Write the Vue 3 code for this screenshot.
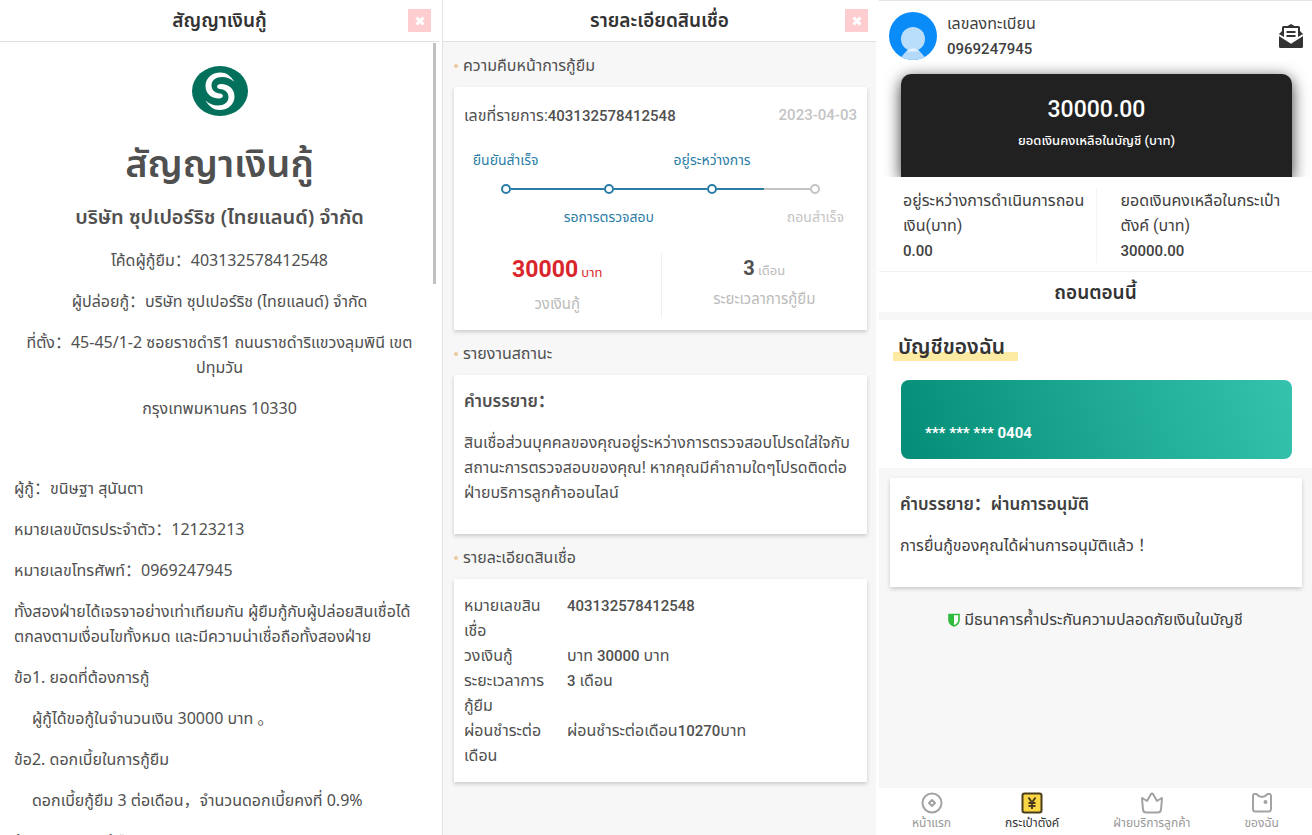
<template>
  <div class="screens">
    <!-- Contract -->
    <section class="panel contract">
      <header class="panel-header">
        <h2 class="panel-title">สัญญาเงินกู้</h2>
        <button class="close-button" type="button" aria-label="ปิด">
          <svg viewBox="0 0 12 12" width="12" height="12">
            <path d="M2.5 2.5l7 7M9.5 2.5l-7 7" />
          </svg>
        </button>
      </header>
      <div class="contract-body">
        <svg class="brand" viewBox="0 0 56 50" width="56" height="50">
          <ellipse cx="28" cy="25" rx="28" ry="25" fill="#03705b" />
          <path
            d="M42.500 16C38.500 9.500 34 6.500 28.500 6.500C19.500 6.500 13.500 12.500 13.500 20C13.500 27.500 19 32.500 27 32.500C32 32.500 32 28 28 27.500C23 27 19.500 24 19.500 19.500C19.500 14 24 11 30 11C35 11 38.500 12.500 42.500 16Z"
            fill="#fff"
          />
          <path
            d="M13.500 34.500C17.500 41 22 44 27.500 44C36.500 44 42.500 38 42.500 30.500C42.500 23 37 18 29 18C24 18 24 22.500 28 23C33 23.500 36.500 26.500 36.500 31C36.500 36.500 32 39.500 26 39.500C21 39.500 17.500 38 13.500 34.500Z"
            fill="#fff"
          />
        </svg>
        <h1 class="contract-title">สัญญาเงินกู้</h1>
        <h4 class="company">บริษัท ซุปเปอร์ริช (ไทยแลนด์) จำกัด</h4>
        <div class="parties">
          <p v-for="line in parties" :key="line">{{ line }}</p>
        </div>
        <p v-for="item in clauses" :key="item.text" :class="{ indent: item.indent }">{{ item.text }}</p>
      </div>
      <div class="scroll-thumb"></div>
    </section>

    <!-- Loan detail -->
    <section class="panel detail">
      <header class="panel-header">
        <h2 class="panel-title">รายละเอียดสินเชื่อ</h2>
        <button class="close-button" type="button" aria-label="ปิด">
          <svg viewBox="0 0 12 12" width="12" height="12">
            <path d="M2.5 2.5l7 7M9.5 2.5l-7 7" />
          </svg>
        </button>
      </header>

      <h3 class="section-label">ความคืบหน้าการกู้ยืม</h3>
      <div class="card progress-card">
        <div class="order-row">
          <span>เลขที่รายการ:<b>403132578412548</b></span>
          <time datetime="2023-04-03">2023-04-03</time>
        </div>
        <ol class="steps">
          <li v-for="step in steps" :key="step.label" class="step" :class="step.state">
            <span class="step-label">{{ step.label }}</span>
            <span class="step-track">
              <i class="line"></i>
              <i class="dot"></i>
              <i class="line"></i>
            </span>
          </li>
        </ol>
        <div class="stats">
          <div class="stat amount">
            <p class="stat-value"><b>30000</b> บาท</p>
            <p class="stat-label">วงเงินกู้</p>
          </div>
          <div class="stat period">
            <p class="stat-value"><b>3</b> เดือน</p>
            <p class="stat-label">ระยะเวลาการกู้ยืม</p>
          </div>
        </div>
      </div>

      <h3 class="section-label">รายงานสถานะ</h3>
      <div class="card note-card">
        <h4>คำบรรยาย：</h4>
        <p>สินเชื่อส่วนบุคคลของคุณอยู่ระหว่างการตรวจสอบโปรดใส่ใจกับสถานะการตรวจสอบของคุณ! หากคุณมีคำถามใดๆโปรดติดต่อฝ่ายบริการลูกค้าออนไลน์</p>
      </div>

      <h3 class="section-label">รายละเอียดสินเชื่อ</h3>
      <div class="card">
        <table class="loan-table">
          <tbody>
            <tr v-for="row in loanRows" :key="row.name">
              <th scope="row">{{ row.name }}</th>
              <td>{{ row.before }}<b>{{ row.number }}</b>{{ row.after }}</td>
            </tr>
          </tbody>
        </table>
      </div>
    </section>

    <!-- Wallet -->
    <section class="panel wallet">
      <div class="wallet-top">
        <div class="profile">
          <svg class="avatar" viewBox="0 0 48 48" width="48" height="48">
            <defs>
              <clipPath id="avatar-clip"><circle cx="24" cy="24" r="24" /></clipPath>
            </defs>
            <g clip-path="url(#avatar-clip)">
              <rect width="48" height="48" fill="#0a8cf8" />
              <path d="M10 50C12 44 16 41 18.500 38Q24 33 29.500 38C32 41 36 44 38 50Z" fill="#b3dafb" />
              <circle cx="24" cy="27" r="12" fill="#b9defc" />
              <path d="M18 39.500Q24 33 30 39.500Z" fill="#e3f2fe" />
            </g>
          </svg>
          <div class="profile-text">
            <p>เลขลงทะเบียน</p>
            <p><b>0969247945</b></p>
          </div>
          <button class="mail-button" type="button" aria-label="ข้อความ">
            <svg viewBox="0 0 26 26" width="26" height="26">
              <path d="M4 4.500Q4 3 5.500 3H9.500L13 1L16.500 3H20.500Q22 3 22 4.500V8L25 11V23.500Q25 25 23.500 25H2.500Q1 25 1 23.500V11L4 8Z" fill="#333" />
              <path d="M6 5H20V14.500L13 19L6 14.500Z" fill="#fff" />
              <path d="M1 12L13 19.500L25 12" fill="none" stroke="#fff" stroke-width="2" />
              <path d="M8.500 9H17.500M8.500 13H17.500" stroke="#333" stroke-width="2" />
            </svg>
          </button>
        </div>
        <div class="balance-wrap">
          <div class="balance">
            <strong>30000.00</strong>
            <span>ยอดเงินคงเหลือในบัญชี (บาท)</span>
          </div>
        </div>
        <div class="funds">
          <div class="fund">
            <p>อยู่ระหว่างการดำเนินการถอนเงิน(บาท)</p>
            <p><b>0.00</b></p>
          </div>
          <div class="fund">
            <p>ยอดเงินคงเหลือในกระเป๋าตังค์ (บาท)</p>
            <p><b>30000.00</b></p>
          </div>
        </div>
        <button class="withdraw" type="button">ถอนตอนนี้</button>
      </div>

      <div class="account">
        <h3 class="account-title">บัญชีของฉัน</h3>
        <div class="bank-card">*** *** *** 0404</div>
      </div>

      <div class="card result-card">
        <h4>คำบรรยาย：ผ่านการอนุมัติ</h4>
        <p>การยื่นกู้ของคุณได้ผ่านการอนุมัติแล้ว ！</p>
      </div>

      <p class="guarantee">
        <svg viewBox="0 0 12 14" width="12" height="14">
          <path d="M1 1.500H11V7Q11 11 6 13Q1 11 1 7Z" fill="#fff" stroke="#2fbb3c" stroke-width="1.600" />
          <path d="M1 1.500H6V13Q1 11 1 7Z" fill="#2fbb3c" />
        </svg>
        มีธนาคารค้ำประกันความปลอดภัยเงินในบัญชี
      </p>

      <nav class="tabbar">
        <a href="#" class="tab">
          <svg viewBox="0 0 22 22" width="22" height="22">
            <circle cx="11" cy="11" r="9.500" />
            <path d="M11 8L14 11L11 14L8 11Z" />
          </svg>
          หน้าแรก
        </a>
        <a href="#" class="tab active">
          <svg viewBox="0 0 22 22" width="22" height="22">
            <rect x="1.500" y="1.500" width="19" height="19" rx="2" />
            <path d="M7.500 5.500L11 10.500L14.500 5.500M11 10.500V17M7.500 11H14.500M7.500 14H14.500" />
          </svg>
          กระเป๋าตังค์
        </a>
        <a href="#" class="tab">
          <svg viewBox="0 0 22 22" width="22" height="22">
            <path d="M1 6.500Q1 5.500 2 6.500L6 9L10 2Q11 0.800 12 2L16 9L20 6.500Q21 5.500 21 6.500L20 17.500Q19.500 20.500 17 20.500H5Q2.500 20.500 2 17.500Z" />
          </svg>
          ฝ่ายบริการลูกค้า
        </a>
        <a href="#" class="tab">
          <svg viewBox="0 0 22 22" width="22" height="22">
            <path d="M3.500 2H5.500Q8 5 11 5Q14 5 16.500 2H18.500Q20 2 20 4V17Q20 19.500 17.500 19.500H4.500Q2 19.500 2 17V4Q2 2 3.500 2Z" />
            <circle cx="14.500" cy="10" r="1" />
          </svg>
          ของฉัน
        </a>
      </nav>
    </section>
  </div>
</template>

<script setup>
const parties = [
  'โค้ดผู้กู้ยืม：403132578412548',
  'ผู้ปล่อยกู้：บริษัท ซุปเปอร์ริช (ไทยแลนด์) จำกัด',
  'ที่ตั้ง：45-45/1-2 ซอยราชดำริ1 ถนนราชดำริแขวงลุมพินี เขตปทุมวัน',
  'กรุงเทพมหานคร 10330'
]

const clauses = [
  { text: 'ผู้กู้：ขนิษฐา สุนันตา' },
  { text: 'หมายเลขบัตรประจำตัว：12123213' },
  { text: 'หมายเลขโทรศัพท์：0969247945' },
  { text: 'ทั้งสองฝ่ายได้เจรจาอย่างเท่าเทียมกัน ผู้ยืมกู้กับผู้ปล่อยสินเชื่อได้ตกลงตามเงื่อนไขทั้งหมด และมีความน่าเชื่อถือทั้งสองฝ่าย' },
  { text: 'ข้อ1. ยอดที่ต้องการกู้' },
  { text: 'ผู้กู้ได้ขอกู้ในจำนวนเงิน 30000 บาท 。', indent: true },
  { text: 'ข้อ2. ดอกเบี้ยในการกู้ยืม' },
  { text: 'ดอกเบี้ยกู้ยืม 3 ต่อเดือน，จำนวนดอกเบี้ยคงที่ 0.9%', indent: true },
  { text: 'ข้อ3. ระยะเวลากู้ยืม' }
]

const steps = [
  { label: 'ยืนยันสำเร็จ', state: 'done' },
  { label: 'รอการตรวจสอบ', state: 'done' },
  { label: 'อยู่ระหว่างการ', state: 'done' },
  { label: 'ถอนสำเร็จ', state: 'pending' }
]

const loanRows = [
  { name: 'หมายเลขสินเชื่อ', before: '', number: '403132578412548', after: '' },
  { name: 'วงเงินกู้', before: 'บาท ', number: '30000', after: ' บาท' },
  { name: 'ระยะเวลาการกู้ยืม', before: '', number: '3', after: ' เดือน' },
  { name: 'ผ่อนชำระต่อเดือน', before: 'ผ่อนชำระต่อเดือน', number: '10270', after: 'บาท' }
]
</script>

<style>
body {
  background: #fff;
}
</style>

<style scoped>
.screens {
  display: grid;
  grid-template-columns: 439fr 434fr 433fr;
  gap: 3px;
  height: 100vh;
  overflow: hidden;
  font-family: Roboto, "Noto Sans Thai", "Noto Sans", "Noto Sans CJK SC", sans-serif;
  font-size: 16px;
  line-height: 25px;
  color: #505050;
}

h1,
h2,
h3,
h4,
p,
ol {
  margin: 0;
  padding: 0;
}

b {
  font-size: 15px;
  line-height: 20px;
  font-weight: 500;
}

button {
  font: inherit;
  border: none;
  background: none;
  padding: 0;
  cursor: pointer;
}

.panel {
  display: flex;
  flex-direction: column;
  min-width: 0;
  min-height: 0;
}

.panel-header {
  display: grid;
  grid-template-columns: 1fr auto 1fr;
  align-items: center;
  flex: none;
  box-sizing: border-box;
  height: 42px;
  padding: 0 8px;
  background: #fff;
  border-bottom: 1px solid #e0e0e0;
}

.panel-title {
  grid-column: 2;
  font-size: 19px;
  font-weight: 600;
  color: #333;
}

.close-button {
  display: grid;
  place-items: center;
  justify-self: end;
  width: 23px;
  height: 23px;
  background: #fdcdd0;
}

.close-button svg {
  fill: none;
  stroke: #fff;
  stroke-width: 3;
}

/* Contract */
.contract {
  position: relative;
  font-family: "Noto Sans", "Noto Sans Thai", "Noto Sans CJK SC", sans-serif;
}

.contract-body {
  flex: 1;
  min-height: 0;
  overflow-y: auto;
  scrollbar-width: none;
  padding: 24px 14px 0;
}

.brand {
  display: block;
  margin: 0 auto 20px;
}

.contract-title {
  font-size: 38px;
  line-height: 52px;
  font-weight: 600;
  text-align: center;
}

.company {
  margin: 16px 0 19px;
  font-size: 20px;
  font-weight: 600;
  text-align: center;
}

.contract-body p {
  margin-bottom: 16px;
}

.parties {
  margin-bottom: 55px;
  text-align: center;
}

.contract-body .indent {
  padding-left: 18px;
}

.scroll-thumb {
  position: absolute;
  top: 43px;
  right: 3px;
  width: 3px;
  height: 241px;
  background: #c1c1c1;
}

/* Loan detail */
.detail {
  background: #f7f7f7;
  border-left: 1px solid #e2e2e2;
}

.section-label {
  display: flex;
  align-items: center;
  gap: 5px;
  margin: 11px 11px 9px;
  font-size: 16px;
  font-weight: 400;
}

.section-label::before {
  content: '';
  width: 4px;
  height: 4px;
  border-radius: 50%;
  background: #ecc9a0;
}

.card {
  margin: 0 9px 0 11px;
  padding: 14px 10px;
  background: #fff;
  box-shadow: 0 2px 4px rgba(0, 0, 0, 0.18);
}

.card h4 {
  margin-bottom: 16px;
  font-size: 17px;
  font-weight: 600;
}

.note-card,
.result-card {
  padding-bottom: 29px;
}

.progress-card {
  padding: 16px 0 12px;
}

.order-row {
  display: flex;
  justify-content: space-between;
  padding: 0 10px;
}

.order-row time {
  font-size: 15px;
  font-weight: 500;
  color: #c4c4c4;
}

.steps {
  display: grid;
  grid-template-columns: repeat(4, 1fr);
  margin-top: 20px;
  list-style: none;
}

.step {
  display: grid;
  grid-template-rows: 25px 32px 25px;
  font-size: 14px;
  text-align: center;
  color: #2b7da6;
}

.step-label {
  grid-row: 1;
  white-space: nowrap;
}

.step:nth-child(even) .step-label {
  grid-row: 3;
}

.step-track {
  grid-row: 2;
  display: flex;
  align-items: center;
}

.line {
  flex: 1;
  height: 2px;
  background: currentColor;
}

.dot {
  box-sizing: border-box;
  width: 10px;
  height: 10px;
  border: 2px solid currentColor;
  border-radius: 50%;
}

.step:first-child .line:first-child,
.step:last-child .line:last-child {
  background: none;
}

.pending {
  color: #c4c4c4;
}

.stats {
  display: grid;
  grid-template-columns: 1fr 1fr;
  margin-top: 24px;
}

.stat {
  height: 64px;
  text-align: center;
  font-size: 13px;
  color: #bbb;
}

.stat + .stat {
  border-left: 1px solid #f0f0f0;
}

.amount .stat-value {
  line-height: 38px;
  color: #d8262c;
}

.amount b {
  font-size: 23px;
  font-weight: 700;
}

.period .stat-value {
  line-height: 33px;
}

.period b {
  font-size: 20px;
  font-weight: 700;
  color: #505050;
}

.stat-label {
  font-size: 15px;
}

.loan-table {
  width: 100%;
  border-collapse: collapse;
}

.loan-table th,
.loan-table td {
  padding: 0;
  vertical-align: top;
  text-align: left;
  font-weight: 400;
}

.loan-table th {
  width: 88px;
  padding-right: 15px;
}

/* Wallet */
.wallet {
  background: #f7f7f7;
  color: #404040;
}

.wallet-top,
.account {
  background: #fff;
}

.wallet-top {
  border-top: 1px solid #e4e4e4;
}

.profile {
  display: flex;
  align-items: center;
  gap: 10px;
  padding: 10px 8px 0 10px;
}

.profile-text {
  flex: 1;
}

.mail-button svg {
  display: block;
}

.balance-wrap {
  overflow: hidden;
  padding: 13px 20px 0 22px;
}

.balance {
  display: flex;
  flex-direction: column;
  align-items: center;
  box-sizing: border-box;
  height: 103px;
  padding-top: 19px;
  border-radius: 10px 10px 0 0;
  background: #212121;
  box-shadow: 0 4px 16px rgba(0, 0, 0, 0.8);
  color: #fff;
}

.balance strong {
  font-size: 23px;
  line-height: 34px;
  font-weight: 500;
}

.balance span {
  font-size: 13px;
  line-height: 28px;
  font-weight: 500;
}

.funds {
  display: grid;
  grid-template-columns: 1fr 1fr;
  padding: 11px 0 8px;
}

.fund {
  padding: 0 8px 0 24px;
}

.fund + .fund {
  border-left: 1px solid #f4f4f4;
}

.withdraw {
  display: block;
  width: 100%;
  height: 41px;
  border-top: 1px solid #f0f0f0;
  font-size: 19px;
  font-weight: 600;
  color: #333;
}

.account {
  margin-top: 8px;
  padding: 14px 20px 9px 14px;
}

.account-title {
  width: fit-content;
  padding: 0 13px 0 5px;
  font-size: 21px;
  line-height: 27px;
  font-weight: 600;
  color: #333;
  background: linear-gradient(#fdeaa3, #fdeaa3) bottom / 100% 9px no-repeat;
}

.bank-card {
  box-sizing: border-box;
  height: 79px;
  margin: 19px 0 0 8px;
  padding: 41px 24px 0;
  border-radius: 8px;
  background: linear-gradient(70deg, #048d76, #35c3ae);
  font-weight: 700;
  font-size: 15px;
  color: #fff;
}

.result-card {
  margin: 10px 10px 0 11px;
}

.guarantee {
  display: flex;
  align-items: center;
  justify-content: center;
  gap: 4px;
  margin-top: 20px;
}

.tabbar {
  display: flex;
  justify-content: space-around;
  box-sizing: border-box;
  height: 47px;
  margin-top: auto;
  padding: 4px 6px 0;
  background: #fff;
}

.tab {
  display: flex;
  flex-direction: column;
  align-items: center;
  font-size: 12px;
  line-height: 18px;
  color: #999;
  text-decoration: none;
}

.tab svg {
  fill: none;
  stroke: #a3a3a3;
  stroke-width: 2;
  stroke-linejoin: round;
}

.active {
  color: #333;
}

.active svg {
  stroke: #4b3d1c;
}

.active rect {
  fill: #fbd746;
}
</style>
